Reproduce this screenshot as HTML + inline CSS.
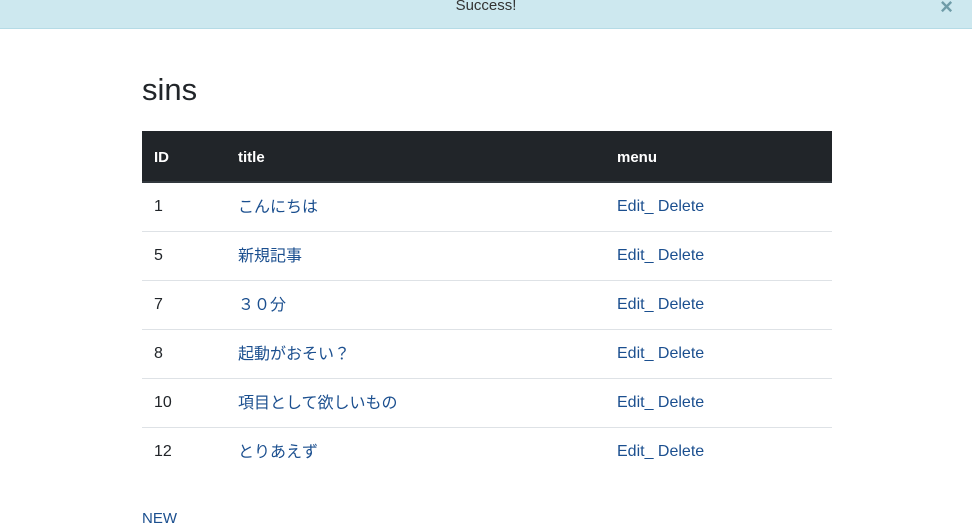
<!DOCTYPE html>
<html><head><meta charset="utf-8"><style>
*{margin:0;padding:0;box-sizing:border-box}
body{width:972px;height:518px;overflow:hidden;background:#fff;font-family:"Liberation Sans","Noto Sans CJK JP",sans-serif;color:#212529;font-size:16px}
.alert{position:absolute;left:0;top:0;width:972px;height:29px;background:#cde8ef;border-bottom:1px solid #b5dbe6;text-align:center;color:#333;font-size:15px;line-height:10px}
.alert span{position:relative;top:1px}
.x{position:absolute;right:19px;top:-2px;font-weight:bold;color:#6f9ca8;font-size:22px;line-height:18px}
h1{position:absolute;left:142px;top:72px;font-size:31px;font-weight:400;color:#212529}
table{position:absolute;left:142px;top:131px;width:690px;border-collapse:collapse}
th{background:#212529;color:#fff;text-align:left;height:51px;font-size:15px;font-weight:bold;padding:2px 12px 0;border-bottom:2px solid #32383e}
td{height:49px;border-bottom:1px solid #dee2e6;padding:0 12px;font-size:16px;line-height:20px}
tr:last-child td{border-bottom:none}
a{color:#1b4f8f;text-decoration:none}
a.j{position:relative;top:1px}
.new{position:absolute;left:142px;top:510px;font-size:15px}
</style></head><body>
<div class="alert"><span>Success!</span><div class="x">×</div></div>
<h1>sins</h1>
<table>
<tr><th style="width:84px">ID</th><th style="width:379px">title</th><th>menu</th></tr>
<tr><td>1</td><td><a class="j">こんにちは</a></td><td><a>Edit_ Delete</a></td></tr>
<tr><td>5</td><td><a class="j">新規記事</a></td><td><a>Edit_ Delete</a></td></tr>
<tr><td>7</td><td><a class="j">３０分</a></td><td><a>Edit_ Delete</a></td></tr>
<tr><td>8</td><td><a class="j">起動がおそい？</a></td><td><a>Edit_ Delete</a></td></tr>
<tr><td>10</td><td><a class="j">項目として欲しいもの</a></td><td><a>Edit_ Delete</a></td></tr>
<tr><td>12</td><td><a class="j">とりあえず</a></td><td><a>Edit_ Delete</a></td></tr>
</table>
<a class="new">NEW</a>
</body></html>
